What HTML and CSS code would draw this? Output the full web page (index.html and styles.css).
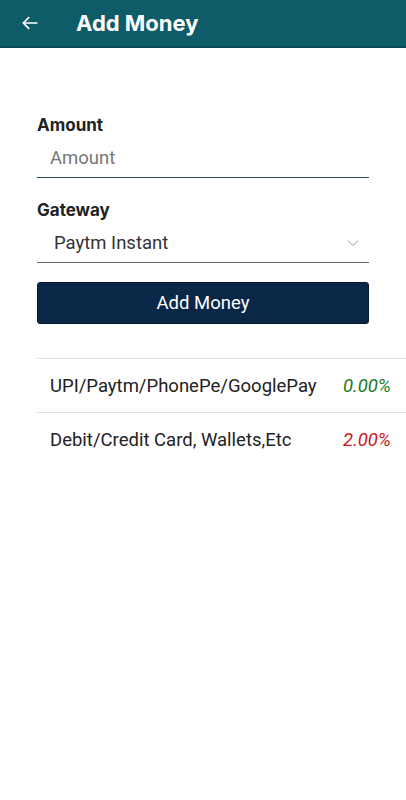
FILE: index.html
```html
<!DOCTYPE html>
<html lang="en">
<head>
    <meta charset="UTF-8">
    <meta name="viewport" content="width=device-width, initial-scale=1.0">
    <title>Add Money</title>
    <link rel="stylesheet" href="styles.css">
</head>
<body>
    <header class="topbar">
        <svg class="back" width="20" height="20" viewBox="0 0 24 24">
            <path d="M21 12H4M11 5l-7 7 7 7" fill="none" stroke="#fff" stroke-width="2"/>
        </svg>
        <h1>Add Money</h1>
    </header>
    <div class="container">
        <form class="form">
            <label class="label">Amount</label>
            <input class="field" type="text" placeholder="Amount">
            <label class="label">Gateway</label>
            <div class="select">
                <span>Paytm Instant</span>
                <svg width="12" height="8" viewBox="0 0 12 8">
                    <path d="M1 1.5l5 5 5-5" fill="none" stroke="#999" stroke-width="1"/>
                </svg>
            </div>
            <button class="btn" type="button">Add Money</button>
        </form>
        <table class="fees">
            <tr>
                <td>UPI/Paytm/PhonePe/GooglePay</td>
                <td class="pct free">0.00%</td>
            </tr>
            <tr>
                <td>Debit/Credit Card, Wallets,Etc</td>
                <td class="pct paid">2.00%</td>
            </tr>
        </table>
    </div>
</body>
</html>
```
FILE: styles.css
```css
body {
    font-family: Roboto, "Noto Sans", sans-serif;
    background-color: #fff;
    margin: 0;
    padding: 0;
    color: #222;
}
.topbar {
    height: 46px;
    background-color: #0e5c68;
    border-bottom: 2px solid #0a4a54;
    display: flex;
    align-items: center;
    padding-left: 20px;
}
.back {
    margin-right: 36px;
}
.topbar h1 {
    margin: 0;
    color: #fff;
    font-size: 22px;
    font-weight: 700;
    font-family: Inter, Roboto, sans-serif;
}
.container {
    padding: 67px 0 0 37px;
}
.form {
    width: 332px;
    display: flex;
    flex-direction: column;
}
.label {
    font-size: 17px;
    line-height: 20px;
    font-weight: 700;
    color: #222;
    font-family: Inter, Roboto, sans-serif;
}
.field {
    border: 0;
    border-bottom: 1px solid #2f4f56;
    font-family: Roboto, sans-serif;
    font-size: 18.5px;
    line-height: 22px;
    height: 43px;
    box-sizing: border-box;
    padding: 12px 13px 8px;
    margin-bottom: 22px;
    outline: none;
}
.field::placeholder {
    color: #777;
}
.select {
    display: flex;
    justify-content: space-between;
    align-items: center;
    border-bottom: 1px solid #666;
    font-size: 18.5px;
    line-height: 22px;
    padding: 12px 10px 8px 17px;
    color: #333;
}
.btn {
    margin-top: 19px;
    height: 42px;
    background-color: #0b2747;
    color: #fff;
    border: 1px solid #061a30;
    border-radius: 3px;
    font-family: Roboto, sans-serif;
    font-size: 18.5px;
}
.fees {
    margin-top: 34px;
    width: 100%;
    border-collapse: collapse;
    font-size: 18.5px;
}
.fees td {
    border-top: 1px solid #e2e2e2;
    height: 53px;
    padding: 0 0 0 13px;
}
.fees .pct {
    font-style: italic;
    text-align: right;
    padding-right: 15px;
}
.free {
    color: #1c7a1c;
}
.paid {
    color: #cc1818;
}
```
